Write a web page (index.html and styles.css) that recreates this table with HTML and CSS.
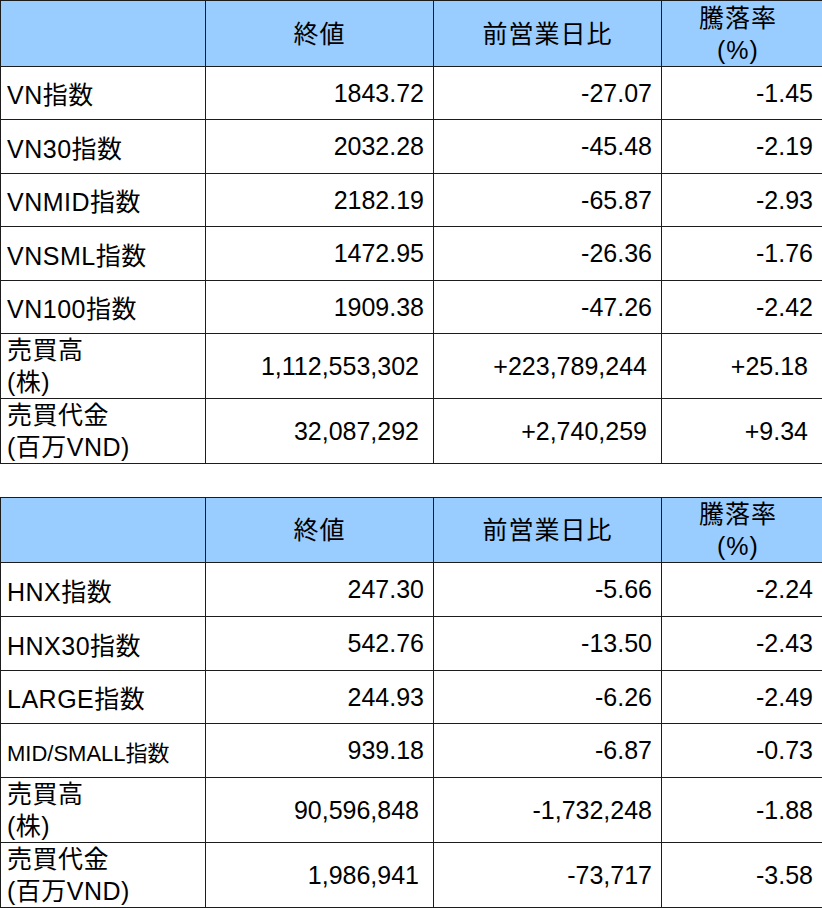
FILE: index.html
```html
<!DOCTYPE html>
<html lang="ja">
<head>
<meta charset="utf-8">
<title>指数</title>
<link rel="stylesheet" href="styles.css">
</head>
<body>
<div class="page">
  <table class="market first">
    <colgroup><col class="c1"><col class="c2"><col class="c3"><col class="c4"></colgroup>
    <thead>
      <tr class="head">
        <th></th>
        <th>終値</th>
        <th>前営業日比</th>
        <th class="rate">騰落率<br>(%)</th>
      </tr>
    </thead>
    <tbody>
      <tr class="idx"><td class="label">VN指数</td><td>1843.72</td><td>-27.07</td><td>-1.45</td></tr>
      <tr class="idx tall"><td class="label">VN30指数</td><td>2032.28</td><td>-45.48</td><td>-2.19</td></tr>
      <tr class="idx"><td class="label">VNMID指数</td><td>2182.19</td><td>-65.87</td><td>-2.93</td></tr>
      <tr class="idx tall"><td class="label">VNSML指数</td><td>1472.95</td><td>-26.36</td><td>-1.76</td></tr>
      <tr class="idx"><td class="label">VN100指数</td><td>1909.38</td><td>-47.26</td><td>-2.42</td></tr>
      <tr class="vol"><td class="label">売買高<br>(株)</td><td class="wide">1,112,553,302</td><td class="wide">+223,789,244</td><td class="wide">+25.18</td></tr>
      <tr class="vol"><td class="label">売買代金<br>(百万VND)</td><td class="wide">32,087,292</td><td class="wide">+2,740,259</td><td class="wide">+9.34</td></tr>
    </tbody>
  </table>

  <table class="market second">
    <colgroup><col class="c1"><col class="c2"><col class="c3"><col class="c4"></colgroup>
    <thead>
      <tr class="head">
        <th></th>
        <th>終値</th>
        <th>前営業日比</th>
        <th class="rate">騰落率<br>(%)</th>
      </tr>
    </thead>
    <tbody>
      <tr class="idx tall"><td class="label">HNX指数</td><td>247.30</td><td>-5.66</td><td>-2.24</td></tr>
      <tr class="idx tall"><td class="label">HNX30指数</td><td>542.76</td><td>-13.50</td><td>-2.43</td></tr>
      <tr class="idx"><td class="label">LARGE指数</td><td>244.93</td><td>-6.26</td><td>-2.49</td></tr>
      <tr class="idx tall"><td class="label small">MID/SMALL指数</td><td>939.18</td><td>-6.87</td><td>-0.73</td></tr>
      <tr class="vol"><td class="label">売買高<br>(株)</td><td class="wide">90,596,848</td><td>-1,732,248</td><td>-1.88</td></tr>
      <tr class="vol"><td class="label">売買代金<br>(百万VND)</td><td class="wide">1,986,941</td><td>-73,717</td><td>-3.58</td></tr>
    </tbody>
  </table>
</div>
</body>
</html>
```

FILE: styles.css
```css
html, body {
  margin: 0;
  padding: 0;
  background: #ffffff;
}

.page {
  display: flex;
  flex-direction: column;
  gap: 33px;
  width: 822px;
}

.market {
  border-collapse: collapse;
  table-layout: fixed;
  width: 822px;
  font-family: "Liberation Sans", "Noto Sans CJK JP", sans-serif;
  font-size: 25px;
  color: #000;
}

.c1 { width: 205px; }
.c2 { width: 228px; }
.c3 { width: 228px; }
.c4 { width: 161px; }

.market th,
.market td {
  border: 1px solid #1c1c1c;
  padding: 0 9px 0 6px;
  vertical-align: middle;
  white-space: nowrap;
}

.head th {
  background: #99ccff;
  height: 65px;
  font-weight: normal;
  text-align: center;
  letter-spacing: 1px;
  line-height: 32px;
  padding: 0;
}

.second .head th {
  height: 63px;
}

.head th.rate {
  padding-right: 8px;
}

.idx td {
  height: 52px;
  text-align: right;
}

.idx.tall td {
  height: 53px;
}

.vol td {
  height: 64px;
  text-align: right;
  line-height: 32px;
}

.market td.label {
  text-align: left;
  letter-spacing: 0.5px;
  padding-left: 6px;
}

.market td.small {
  font-size: 22px;
  letter-spacing: 0;
}

.market td.wide {
  padding-right: 14px;
}
```
